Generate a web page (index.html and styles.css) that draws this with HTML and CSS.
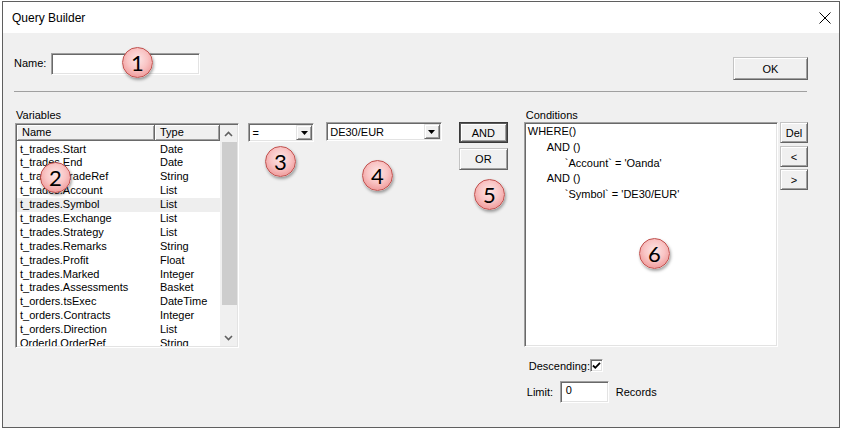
FILE: index.html
```html
<!DOCTYPE html>
<html>
<head>
<meta charset="utf-8">
<title>Query Builder</title>
<link rel="stylesheet" href="styles.css">
</head>
<body>
<div class="window">
  <div class="titlebar">
    <span class="title">Query Builder</span>
    <svg class="close" width="12" height="12" viewBox="0 0 12 12"><path d="M0.5 0.5 L11.5 11.5 M11.5 0.5 L0.5 11.5" stroke="#000" stroke-width="1" fill="none"/></svg>
  </div>
  <div class="body">
    <div class="top-row">
      <span class="name-label">Name:</span>
      <div class="field name-field"></div>
      <div class="btn ok">OK</div>
    </div>
    <div class="sep"></div>
    <div class="main">
      <div class="col-vars">
        <div class="cap cap-vars">Variables</div>
        <div class="listbox sunken">
          <div class="list-main">
            <div class="list-head">
              <div class="hcell hname">Name</div>
              <div class="hcell htype">Type</div>
            </div>
            <div class="rows">
              <div class="row"><span class="c-name">t_trades.Start</span><span class="c-type">Date</span></div>
              <div class="row"><span class="c-name">t_trades.End</span><span class="c-type">Date</span></div>
              <div class="row"><span class="c-name">t_trades.TradeRef</span><span class="c-type">String</span></div>
              <div class="row"><span class="c-name">t_trades.Account</span><span class="c-type">List</span></div>
              <div class="row row-hover"><span class="c-name">t_trades.Symbol</span><span class="c-type">List</span></div>
              <div class="row"><span class="c-name">t_trades.Exchange</span><span class="c-type">List</span></div>
              <div class="row"><span class="c-name">t_trades.Strategy</span><span class="c-type">List</span></div>
              <div class="row"><span class="c-name">t_trades.Remarks</span><span class="c-type">String</span></div>
              <div class="row"><span class="c-name">t_trades.Profit</span><span class="c-type">Float</span></div>
              <div class="row"><span class="c-name">t_trades.Marked</span><span class="c-type">Integer</span></div>
              <div class="row"><span class="c-name">t_trades.Assessments</span><span class="c-type">Basket</span></div>
              <div class="row"><span class="c-name">t_orders.tsExec</span><span class="c-type">DateTime</span></div>
              <div class="row"><span class="c-name">t_orders.Contracts</span><span class="c-type">Integer</span></div>
              <div class="row"><span class="c-name">t_orders.Direction</span><span class="c-type">List</span></div>
              <div class="row"><span class="c-name">OrderId.OrderRef</span><span class="c-type">String</span></div>
            </div>
          </div>
          <div class="vscroll">
            <div class="sb-btn"><svg width="9" height="6" viewBox="0 0 9 6"><path d="M1 5 L4.5 1.5 L8 5" stroke="#606060" stroke-width="1.6" fill="none"/></svg></div>
            <div class="sb-track"><div class="sb-thumb"></div></div>
            <div class="sb-btn"><svg width="9" height="6" viewBox="0 0 9 6"><path d="M1 1 L4.5 4.5 L8 1" stroke="#606060" stroke-width="1.6" fill="none"/></svg></div>
          </div>
        </div>
      </div>

      <div class="col-op">
        <div class="combo sunken">
          <span class="combo-text">=</span>
          <div class="combo-btn"><svg width="7" height="4" viewBox="0 0 7 4"><path d="M0 0 H7 L3.5 4 Z" fill="#000"/></svg></div>
        </div>
      </div>

      <div class="col-val">
        <div class="combo sunken">
          <span class="combo-text">DE30/EUR</span>
          <div class="combo-btn"><svg width="7" height="4" viewBox="0 0 7 4"><path d="M0 0 H7 L3.5 4 Z" fill="#000"/></svg></div>
        </div>
      </div>

      <div class="col-logic">
        <div class="btn btn-default and">AND</div>
        <div class="btn or">OR</div>
      </div>

      <div class="col-cond">
        <div class="cap cap-cond">Conditions</div>
        <div class="cond-box sunken">
          <div class="cl l0">WHERE()</div>
          <div class="cl l1">AND ()</div>
          <div class="cl l2">`Account` = 'Oanda'</div>
          <div class="cl l1">AND ()</div>
          <div class="cl l2">`Symbol` = 'DE30/EUR'</div>
        </div>
        <div class="desc-row">
          <span class="desc-label">Descending:</span>
          <span class="checkbox sunken"><svg width="9" height="9" viewBox="0 0 9 9"><path d="M1 4.5 L3.3 6.8 L8 1.8" stroke="#000" stroke-width="1.8" fill="none"/></svg></span>
        </div>
        <div class="limit-row">
          <span class="limit-label">Limit:</span>
          <div class="field limit-field">0</div>
          <span class="records">Records</span>
        </div>
      </div>

      <div class="col-side">
        <div class="btn side del">Del</div>
        <div class="btn side lt">&lt;</div>
        <div class="btn side gt">&gt;</div>
      </div>
    </div>
  </div>

  <div class="badge b1">1</div>
  <div class="badge b2">2</div>
  <div class="badge b3">3</div>
  <div class="badge b4">4</div>
  <div class="badge b5">5</div>
  <div class="badge b6">6</div>
</div>
</body>
</html>
```

FILE: styles.css
```css
html, body {
  margin: 0;
  padding: 0;
  background: #ffffff;
}

body {
  font-family: "Liberation Sans", Arial, sans-serif;
  font-size: 11px;
  color: #000;
}

.window {
  position: relative;
  box-sizing: border-box;
  margin: 1px 0 0 2px;
  width: 838px;
  height: 427px;
  border: 1px solid #5f5f5f;
  background: #f0f0f0;
  display: flex;
  flex-direction: column;
}

.titlebar {
  height: 31px;
  flex: none;
  background: #ffffff;
  display: flex;
  align-items: center;
  justify-content: space-between;
  padding: 0 8px 0 9px;
}

.title {
  font-size: 12px;
}

.close {
  display: block;
}

.body {
  flex: 1;
  padding: 0 31px 0 11px;
}

/* generic 3D styles */
.sunken {
  box-sizing: border-box;
  border: 1px solid;
  border-color: #a0a0a0 #ffffff #ffffff #a0a0a0;
  box-shadow: inset 1px 1px #696969, inset -1px -1px #e3e3e3;
  padding: 1px;
}

.field {
  box-sizing: border-box;
  background: #ffffff;
  border: 1px solid;
  border-color: #a0a0a0 #ffffff #ffffff #a0a0a0;
  box-shadow: inset 1px 1px #696969, inset -1px -1px #e3e3e3;
}

.btn {
  box-sizing: border-box;
  background: #f0f0f0;
  border: 1px solid;
  border-color: #c4c4c4 #646464 #646464 #c4c4c4;
  box-shadow: inset 1px 1px #ffffff, inset -1px -1px #a0a0a0;
  display: flex;
  align-items: center;
  justify-content: center;
  font-size: 11px;
}

.btn-default {
  border: 1px solid #3a3a3a;
  box-shadow: inset 1px 1px #5a5a5a, inset -1px -1px #5a5a5a, inset 2px 2px #ffffff, inset -2px -2px #a0a0a0;
}

/* top row */
.top-row {
  display: flex;
  align-items: flex-start;
  margin-top: 20px;
}

.name-label {
  width: 37px;
  line-height: 21px;
}

.name-field {
  width: 149px;
  height: 22px;
}

.ok {
  margin-left: auto;
  margin-top: 4px;
  width: 75px;
  height: 23px;
}

.sep {
  margin: 11px 1px 0 0;
  height: 1px;
  background: #a0a0a0;
}

/* main area */
.main {
  display: flex;
  align-items: flex-start;
  margin-top: 16px;
}

.cap {
  line-height: 14px;
  height: 14px;
}

.cap-vars {
  height: 15px;
  padding-left: 1px;
}

.cap-cond {
  padding-left: 2px;
}

.col-vars {
  margin-left: 1px;
  width: 225px;
}

.listbox {
  height: 225px;
  background: #ffffff;
  display: flex;
}

.list-main {
  flex: 1;
  min-width: 0;
  display: flex;
  flex-direction: column;
}

.list-head {
  display: flex;
  height: 16px;
  flex: none;
}

.hcell {
  box-sizing: border-box;
  height: 16px;
  line-height: 14px;
  background: #f0f0f0;
  border-right: 1px solid #696969;
  border-bottom: 1px solid #696969;
  box-shadow: inset 1px 1px #ffffff, inset -1px -1px #a0a0a0;
}

.hname {
  width: 138px;
  padding-left: 5px;
}

.htype {
  flex: 1;
  padding-left: 5px;
}

.rows {
  flex: 1;
  overflow: hidden;
  padding-top: 1.5px;
}

.row {
  display: flex;
  height: 13.9px;
  line-height: 13.9px;
  white-space: nowrap;
}

.row-hover {
  background: #eeeeee;
}

.c-name {
  width: 138px;
  padding-left: 3px;
  box-sizing: border-box;
}

.c-type {
  padding-left: 5px;
}

.vscroll {
  width: 17px;
  flex: none;
  background: #f0f0f0;
  display: flex;
  flex-direction: column;
}

.sb-btn {
  height: 17px;
  flex: none;
  display: flex;
  align-items: center;
  justify-content: center;
}

.sb-track {
  flex: 1;
  padding-left: 2px;
}

.sb-thumb {
  height: 163px;
  width: 15px;
  background: #cdcdcd;
}

/* combos */
.col-op {
  margin-left: 9px;
  margin-top: 15px;
  width: 66px;
}

.col-val {
  margin-left: 12px;
  margin-top: 14px;
  width: 116px;
}

.combo {
  height: 19px;
  background: #ffffff;
  display: flex;
  align-items: center;
}

.combo-text {
  padding-left: 2px;
  flex: 1;
}

.combo-btn {
  box-sizing: border-box;
  width: 16px;
  height: 15px;
  background: #f0f0f0;
  border: 1px solid;
  border-color: #e3e3e3 #696969 #696969 #e3e3e3;
  box-shadow: inset 1px 1px #ffffff, inset -1px -1px #a0a0a0;
  display: flex;
  align-items: center;
  justify-content: center;
}

.combo-btn svg {
  display: block;
}

/* and/or */
.col-logic {
  margin-left: 17px;
  margin-top: 14px;
  width: 49px;
}

.and {
  height: 21px;
}

.or {
  margin-top: 5px;
  height: 22px;
}

/* conditions */
.col-cond {
  margin-left: 16px;
  width: 255px;
}

.cond-box {
  height: 225px;
  background: #ffffff;
  padding: 1px 2px 1px 3px;
}

.cl {
  line-height: 15.8px;
  white-space: pre;
}

.l1 {
  padding-left: 19px;
}

.l2 {
  padding-left: 37px;
}

.desc-row {
  margin-top: 12px;
  height: 13px;
  display: flex;
  align-items: center;
  padding-left: 5px;
}

.checkbox {
  width: 13px;
  height: 13px;
  background: #ffffff;
  margin-left: 0;
  display: flex;
  align-items: center;
  justify-content: center;
  padding: 0;
}

.checkbox svg {
  display: block;
}

.limit-row {
  margin-top: 9px;
  display: flex;
  align-items: center;
  padding-left: 3px;
}

.limit-label {
  width: 33px;
}

.limit-field {
  width: 49px;
  height: 22px;
  padding: 2px 0 0 5px;
  line-height: 13px;
}

.records {
  margin-left: 7px;
}

/* side buttons */
.col-side {
  margin-left: 2px;
  margin-top: 14px;
  width: 28px;
}

.side {
  height: 21px;
}

.lt {
  margin-top: 3px;
}

.gt {
  margin-top: 2px;
}

/* numbered callouts */
.badge {
  position: absolute;
  box-sizing: border-box;
  width: 31px;
  height: 31px;
  border-radius: 50%;
  border: 1px solid #c0504d;
  background: radial-gradient(circle at 50% 40%, #fde6e6 0%, #f9c4c4 45%, #ef9a9a 80%, #e47c7c 100%);
  box-shadow: 1px 2px 3px rgba(0, 0, 0, 0.35);
  font-family: Lato, "Liberation Sans", sans-serif;
  font-size: 22px;
  line-height: 29px;
  text-align: center;
  color: #000;
}

.b1 { left: 119px; top: 45px; }
.b2 { left: 37px; top: 160px; }
.b3 { left: 262px; top: 144px; }
.b4 { left: 359px; top: 158px; }
.b5 { left: 471px; top: 177px; }
.b6 { left: 636px; top: 236px; }
```
